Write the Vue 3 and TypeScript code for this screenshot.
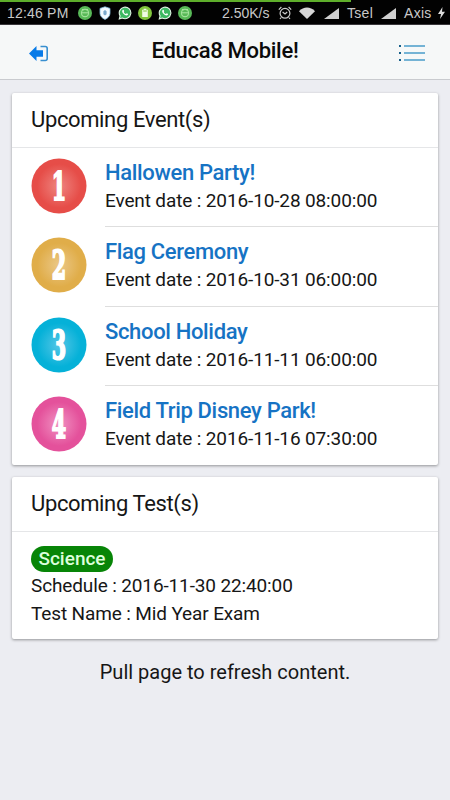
<script setup lang="ts">
interface SchoolEvent {
  title: string
  date: string
  tone: string
}

const events: SchoolEvent[] = [
  { title: 'Hallowen Party!', date: '2016-10-28 08:00:00', tone: 'red' },
  { title: 'Flag Ceremony', date: '2016-10-31 06:00:00', tone: 'gold' },
  { title: 'School Holiday', date: '2016-11-11 06:00:00', tone: 'cyan' },
  { title: 'Field Trip Disney Park!', date: '2016-11-16 07:30:00', tone: 'pink' },
]

const notices: string[] = ['android', 'shield', 'chat', 'battery', 'chat', 'android']
</script>

<template>
  <div class="screen">
    <div class="status">
      <div class="progress"></div>
      <span class="clock">12:46 PM</span>
      <div class="notices">
        <svg v-for="(kind, i) in notices" :key="i" viewBox="0 0 14 14" width="14" height="14">
          <template v-if="kind === 'android'">
            <circle cx="7" cy="7" r="7" fill="#58b957" />
            <path d="M3.5 6.2a3.5 3 0 0 1 7 0v1.6a3.5 3 0 0 1-7 0zM4.2 3l1.2 1.3M9.8 3L8.600 4.300M3.500 6.800h7" fill="none" stroke="#b6edac" stroke-width=".9" />
          </template>
          <template v-else-if="kind === 'shield'">
            <path d="M7 .8l5 1.600v4.800c0 3-2.300 5-5 6.200-2.700-1.200-5-3.200-5-6.200V2.400z" fill="#f2faff" stroke="#87bfe0" stroke-width=".8" />
            <path d="M7 4l1.600 1.200v3L7 9.500 5.400 8.200v-3z" fill="#79a9cc" />
          </template>
          <template v-else-if="kind === 'chat'">
            <path d="M1.300 12.900l.8-3A5.800 5.800 0 1 1 4.300 12z" fill="#3cb862" stroke="#e4f8e8" stroke-width="1.100" />
            <path d="M4.500 4.200c.8-.8 1.300-.1 1.700 1l-.5.800c.5 1 1.100 1.600 2.200 2l.9-.7c1.700.7 1.500 1 .8 1.800-1.800 1.500-6.700-2.900-5.100-4.900z" fill="#fff" />
          </template>
          <template v-else>
            <circle cx="7" cy="7" r="7" fill="#82c63e" />
            <path d="M4.200 3.800h1.500V2.700h2.600v1.100h1.500v7.200H4.200z" fill="#f0fbe5" />
            <path d="M5.200 5h3.600" stroke="#82c63e" />
          </template>
        </svg>
      </div>
      <span class="speed">2.50K/s</span>
      <svg class="alarm" viewBox="0 0 14 14" width="14" height="14" fill="none" stroke="#ccc" stroke-width="1.200">
        <circle cx="7" cy="7.300" r="4.900" />
        <path d="M4.600 6l2.400 2 2.200-2M.8 3.600L3.400 1M13.200 3.600L10.600 1M3.200 11.500l-1.200 1.500M10.800 11.500l1.200 1.500" />
      </svg>
      <svg class="wifi" viewBox="0 0 16 12" width="16" height="12"><path d="M0 4.200C4.500-.6 11.500-.6 16 4.200L8 12z" fill="#d6d6d6" /></svg>
      <svg class="signal" viewBox="0 0 15 11" width="15" height="11"><path d="M15 0v11H0z" fill="#d0d0d0" /></svg>
      <span class="carrier-one">Tsel</span>
      <svg class="signal" viewBox="0 0 15 11" width="15" height="11"><path d="M15 0v11H0z" fill="#d0d0d0" /></svg>
      <span class="carrier-two">Axis</span>
      <svg class="bolt" viewBox="0 0 7 12" width="7" height="12"><path d="M4.500 0L0 7h3L2 12l5-7.200H4z" fill="#ddd" /></svg>
    </div>

    <header class="toolbar">
      <svg class="exit" viewBox="0 0 20 17" width="20" height="17">
        <path d="M0 8.500L7.500 1v4.200h6.500v6.600H7.500V16z" fill="#087be8" />
        <path d="M11.500 1.500h4.700q2 0 2 2v10q0 2-2 2h-4.700" fill="none" stroke="#388fd0" stroke-width="1.600" />
      </svg>
      <h1>Educa8 Mobile!</h1>
      <svg class="menu" viewBox="0 0 28 18" width="28" height="18">
        <path d="M6 2h21M6 9h21M6 16h21" stroke="#4a9cc9" stroke-width="1.500" />
        <path d="M1 2h2M1 9h2M1 16h2" stroke="#17608a" stroke-width="2" />
      </svg>
    </header>

    <main>
      <section class="card events">
        <h2>Upcoming Event(s)</h2>
        <div v-for="(event, i) in events" :key="event.title" class="row">
          <svg class="badge" :class="event.tone" viewBox="0 0 56 56" width="56" height="56">
            <defs>
              <radialGradient :id="'glow-' + event.tone">
                <stop offset="0" class="inner" />
                <stop offset="0.800" class="outer" />
              </radialGradient>
            </defs>
            <circle cx="28" cy="28" r="27.500" :fill="`url(#glow-${event.tone})`" />
            <text transform="translate(28 42) scale(.53 1)" text-anchor="middle">{{ i + 1 }}</text>
          </svg>
          <div class="info">
            <h3>{{ event.title }}</h3>
            <p>Event date : {{ event.date }}</p>
          </div>
        </div>
      </section>

      <section class="card tests">
        <h2>Upcoming Test(s)</h2>
        <div class="test">
          <span class="subject">Science</span>
          <p>Schedule : 2016-11-30 22:40:00</p>
          <p>Test Name : Mid Year Exam</p>
        </div>
      </section>

      <p class="hint">Pull page to refresh content.</p>
    </main>
  </div>
</template>

<style>
body {
  margin: 0;
  background: #ecedf2;
}
</style>

<style scoped>
.screen {
  width: 450px;
  height: 800px;
  overflow: hidden;
  background: #ecedf2;
  color: #161616;
  font-family: Roboto, sans-serif;
}
h1, h2, h3, p {
  margin: 0;
  font-weight: 400;
  white-space: nowrap;
}
svg {
  display: block;
  flex: none;
}
.status {
  position: relative;
  display: flex;
  align-items: center;
  box-sizing: border-box;
  height: 25px;
  padding: 2px 0 0 7px;
  background: #020202;
  border-bottom: 1px solid #39373b;
  color: #c9c9c9;
  font-family: "Liberation Sans", sans-serif;
  font-size: 14px;
  line-height: 20px;
  white-space: nowrap;
}
.progress {
  position: absolute;
  top: 0;
  left: 0;
  width: 351px;
  height: 2px;
  background: #5eae2b;
}
.clock {
  width: 71px;
  letter-spacing: 0.200px;
}
.notices {
  display: flex;
  gap: 6px;
  width: 144px;
}
.speed {
  width: 56px;
}
.alarm {
  margin-right: 7px;
}
.wifi {
  margin-right: 9px;
}
.signal {
  margin-right: 8px;
}
.carrier-one {
  width: 34px;
  letter-spacing: 0.300px;
}
.carrier-two {
  width: 34px;
  letter-spacing: 0.300px;
}
.toolbar {
  display: flex;
  align-items: center;
  justify-content: space-between;
  box-sizing: border-box;
  height: 55px;
  padding: 2px 24px 0 29px;
  background: #f6f8f8;
  border-bottom: 1px solid #c9cbcf;
}
h1 {
  padding: 0 0 5px 3px;
  color: #0b0b0b;
  font-size: 22px;
  font-weight: 500;
  letter-spacing: -0.300px;
}
main {
  display: flex;
  flex-direction: column;
  gap: 12px;
  padding: 13px 12px 0;
}
.card {
  box-sizing: border-box;
  background: #fff;
  border-radius: 2px;
  box-shadow: 0 1px 3px rgba(0, 0, 0, 0.380);
}
.events {
  height: 372px;
}
.tests {
  height: 162px;
}
h2 {
  box-sizing: border-box;
  height: 55px;
  padding-left: 19px;
  border-bottom: 1px solid #e5e6e8;
  font-size: 22px;
  letter-spacing: -0.370px;
  line-height: 54px;
}
.row {
  display: flex;
  box-sizing: border-box;
  height: 79.300px;
  padding-left: 19px;
}
.badge {
  margin: 10px 18px 0 0;
}
.badge text {
  fill: #fff;
  stroke: #fff;
  stroke-width: 2.200px;
  font-family: "DejaVu Serif", serif;
  font-size: 39px;
  font-weight: 700;
}
.outer {
  stop-color: var(--edge);
}
.inner {
  stop-color: var(--core);
}
.red {
  --edge: #e64d48;
  --core: #ee8580;
}
.gold {
  --edge: #e0ad49;
  --core: #ebc888;
}
.cyan {
  --edge: #05b1d8;
  --core: #55c6e6;
}
.pink {
  --edge: #e4519b;
  --core: #f092c2;
}
.info {
  flex: 1;
  padding-top: 11px;
  border-bottom: 1px solid #dedede;
}
.row:last-child .info {
  border-bottom: 0;
}
h3 {
  color: #1673c4;
  font-size: 22px;
  font-weight: 500;
  letter-spacing: -0.340px;
  line-height: 27px;
}
.row p {
  font-size: 19px;
  letter-spacing: -0.130px;
  line-height: 29px;
}
.test {
  padding: 14px 19px 0;
}
.subject {
  display: block;
  width: 82px;
  height: 26px;
  border-radius: 13px;
  background: #078507;
  color: #dcffdc;
  font-size: 19px;
  font-weight: 500;
  line-height: 26px;
  text-align: center;
}
.test p {
  font-size: 19px;
  letter-spacing: -0.130px;
  line-height: 27.500px;
}
.hint {
  padding-top: 8px;
  font-size: 20px;
  line-height: 26px;
  text-align: center;
}
</style>
